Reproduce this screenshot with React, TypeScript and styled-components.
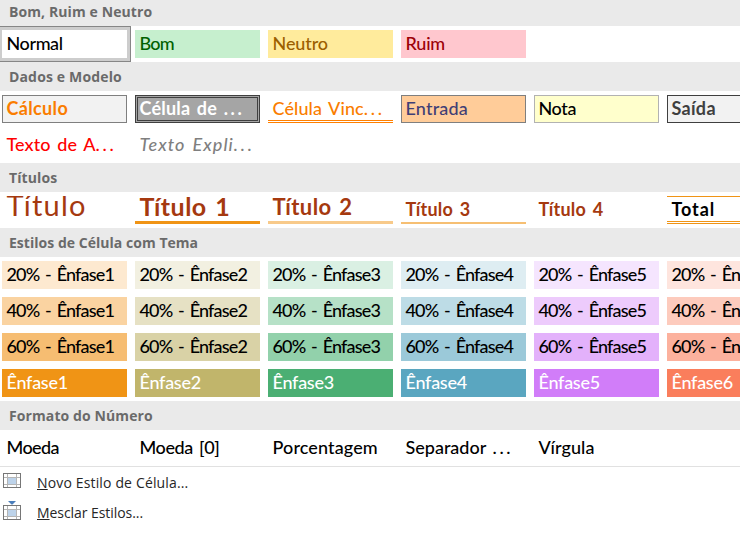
import React from 'react';
import styled, { createGlobalStyle, css } from 'styled-components';

const GlobalStyle = createGlobalStyle`
  body { margin: 0; background: #fff; overflow: hidden; }
`;

const Gallery = styled.main`
  height: 535px;
  overflow: hidden;
  background: #fff;
  font-family: 'Open Sans', 'Noto Sans', sans-serif;
`;

const Viewport = styled.div`
  display: flex;
  flex-direction: column;
  justify-content: flex-end;
  height: 466px;
  overflow: hidden;
`;

const SectionTitle = styled.h2<{ $track?: number }>`
  flex: none;
  margin: 0;
  padding-left: 9px;
  height: 29px;
  line-height: 29px;
  background: #eaeaea;
  color: #6a6a6a;
  font-size: 14px;
  font-weight: 700;
  letter-spacing: ${(p) => p.$track ?? 0.1}px;
`;

const Row = styled.div`
  display: flex;
  flex: none;
  height: 36px;
  margin-left: -2px;
`;

const Slot = styled.div<{ $selected?: boolean }>`
  box-sizing: border-box;
  flex: none;
  width: 133px;
  height: 36px;
  padding: 4px;
  ${(p) =>
    p.$selected &&
    css`
      background: #cdcdcd;
      box-shadow: inset 0 0 0 1px #868686;
    `}
`;

type Edge = 'none' | 'box' | 'double' | 'linked' | 'total' | 'thick' | 'medium';

const edges: Record<Edge, (c: string) => ReturnType<typeof css> | string> = {
  none: () => '',
  box: (c) => css`box-shadow: inset 0 0 0 1px ${c};`,
  double: (c) => css`box-shadow: inset 0 0 0 1px ${c}, inset 0 0 0 2px #a5a5a5, inset 0 0 0 3px ${c};`,
  linked: (c) => css`box-shadow: inset 0 -1px ${c}, inset 0 -2px #fff, inset 0 -3px ${c};`,
  total: (c) => css`box-shadow: inset 0 1px ${c}, inset 0 -1px ${c}, inset 0 -2px #fff, inset 0 -3px ${c};`,
  thick: (c) => css`box-shadow: inset 0 -3px ${c};`,
  medium: (c) => css`box-shadow: inset 0 -2px ${c};`,
};

interface Look {
  $bg?: string;
  $fg?: string;
  $edge?: Edge;
  $line?: string;
  $size?: number;
  $weight?: number;
  $italic?: boolean;
  $track?: number;
}

/* The line height keeps every label on a baseline 20px below the cell top. */
const Swatch = styled.div<Look>`
  height: 28px;
  box-sizing: border-box;
  padding-left: 4.5px;
  overflow: hidden;
  white-space: nowrap;
  font-family: Lato, 'Open Sans', sans-serif;
  background: ${(p) => p.$bg ?? '#fff'};
  color: ${(p) => p.$fg ?? '#000'};
  font-size: ${(p) => p.$size ?? 18}px;
  font-weight: ${(p) => p.$weight ?? 500};
  font-style: ${(p) => (p.$italic ? 'italic' : 'normal')};
  letter-spacing: ${(p) => p.$track ?? 0}px;
  word-spacing: 2px;
  line-height: ${(p) => 2 * (20 - 0.387 * (p.$size ?? 18))}px;
  ${(p) => edges[p.$edge ?? 'none'](p.$line ?? '#000')}
`;

const Dots = styled.span`
  letter-spacing: 2.7px;
`;

interface Style {
  label: string;
  cut?: boolean;
  selected?: boolean;
  look?: Look;
}

const quality: Style[] = [
  { label: 'Normal', selected: true, look: { $track: -0.4 } },
  { label: 'Bom', look: { $bg: '#c6efce', $fg: '#006100', $track: -0.8 } },
  { label: 'Neutro', look: { $bg: '#ffeb9c', $fg: '#9c5f00', $track: -0.1 } },
  { label: 'Ruim', look: { $bg: '#ffc7ce', $fg: '#9c0006', $track: -0.2 } },
];

const data: Style[][] = [
  [
    { label: 'Cálculo', look: { $bg: '#f2f2f2', $fg: '#fa7d00', $weight: 700, $edge: 'box', $line: '#7f7f7f', $track: 0.35 } },
    { label: 'Célula de ', cut: true, look: { $bg: '#a5a5a5', $fg: '#fff', $weight: 700, $edge: 'double', $line: '#3f3f3f', $track: 0.2 } },
    { label: 'Célula Vinc', cut: true, look: { $fg: '#fa7d00', $edge: 'linked', $line: '#ff8001', $track: 0.1 } },
    { label: 'Entrada', look: { $bg: '#ffcc99', $fg: '#3f3f76', $edge: 'box', $line: '#7f7f7f', $track: 0.2 } },
    { label: 'Nota', look: { $bg: '#ffffcc', $edge: 'box', $line: '#b2b2b2', $track: -0.4 } },
    { label: 'Saída', look: { $bg: '#f2f2f2', $fg: '#3f3f3f', $weight: 700, $edge: 'box', $line: '#3f3f3f', $track: 0.3 } },
  ],
  [
    { label: 'Texto de A', cut: true, look: { $fg: '#ff0000', $track: 0.1 } },
    { label: 'Texto Expli', cut: true, look: { $fg: '#7f7f7f', $italic: true, $track: 1.05 } },
  ],
];

const titles: Style[] = [
  { label: 'Título', look: { $fg: '#a5390f', $size: 29, $weight: 400, $track: 1.2 } },
  { label: 'Título 1', look: { $fg: '#a5390f', $size: 25, $weight: 700, $edge: 'thick', $line: '#f09415', $track: 0.45 } },
  { label: 'Título 2', look: { $fg: '#a5390f', $size: 22, $weight: 700, $edge: 'thick', $line: '#f8ca8a', $track: 0.4 } },
  { label: 'Título 3', look: { $fg: '#a5390f', $weight: 700, $edge: 'medium', $line: '#f6bf73', $track: 0.2 } },
  { label: 'Título 4', look: { $fg: '#a5390f', $weight: 700, $track: 0.2 } },
  { label: 'Total', look: { $weight: 700, $edge: 'total', $line: '#f09415', $track: 0.9 } },
];

const accents = [
  ['#fde9d0', '#fad3a1', '#f6bd72', '#f09415'],
  ['#f2f0e1', '#e6e1c4', '#d9d2a6', '#c1b56b'],
  ['#daf0e3', '#b6e1c7', '#92d1ab', '#4baf73'],
  ['#deedf2', '#bddce6', '#9bc9d9', '#5aa6c0'],
  ['#f5e5fe', '#edcbfc', '#e3b1fb', '#d17df9'],
  ['#fee5de', '#fdcbbd', '#fcb19d', '#fa7e5c'],
];

const themed: Style[][] = ['20% - ', '40% - ', '60% - ', ''].map((prefix, level) =>
  accents.map((tints, i) => ({
    label: `${prefix}Ênfase${i + 1}`,
    look: { $bg: tints[level], $fg: prefix ? '#000' : '#fff', $track: prefix ? -0.83 : -0.25 },
  })),
);

const numbers: Style[] = [
  { label: 'Moeda', look: { $track: -0.6 } },
  { label: 'Moeda [0]', look: { $track: -0.4 } },
  { label: 'Porcentagem', look: { $track: 0.12 } },
  { label: 'Separador ', cut: true, look: { $track: 0 } },
  { label: 'Vírgula', look: { $track: 0.1 } },
];

function StyleRow({ items }: { items: Style[] }) {
  return (
    <Row>
      {items.map((s) => (
        <Slot key={s.label} $selected={s.selected}>
          <Swatch {...s.look}>
            {s.label}
            {s.cut && <Dots>...</Dots>}
          </Swatch>
        </Slot>
      ))}
    </Row>
  );
}

const Menu = styled.nav`
  border-top: 1px solid #e1e1e1;
`;

const MenuItem = styled.div<{ $track: number }>`
  display: flex;
  align-items: flex-start;
  height: 30px;
  padding-left: 3px;
  gap: 16px;
  color: #262626;
  font-size: 14px;
  line-height: 32px;
  letter-spacing: ${(p) => p.$track}px;
`;

const AccessKey = styled.span`
  text-decoration: underline;
  text-decoration-thickness: 1px;
  text-underline-offset: 1px;
`;

const Icon = styled.svg<{ $top: number }>`
  display: block;
  flex: none;
  margin-top: ${(p) => p.$top}px;
`;

function TableGlyph() {
  return (
    <>
      <path d="M4.5 1v13M13.5 1v13M1 4.5h16M1 11.5h16" stroke="#b5b5b5" fill="none" />
      <rect x="5" y="5" width="8" height="6" fill="#bdd3ea" />
      <rect x="0.5" y="0.5" width="17" height="14" stroke="#767676" fill="none" />
    </>
  );
}

export default function App() {
  return (
    <Gallery>
      <GlobalStyle />
      <Viewport>
        <SectionTitle>Bom, Ruim e Neutro</SectionTitle>
        <StyleRow items={quality} />
        <SectionTitle $track={0.15}>Dados e Modelo</SectionTitle>
        {data.map((items, i) => <StyleRow key={i} items={items} />)}
        <SectionTitle>Títulos</SectionTitle>
        <StyleRow items={titles} />
        <SectionTitle $track={0.03}>Estilos de Célula com Tema</SectionTitle>
        {themed.map((items, i) => <StyleRow key={i} items={items} />)}
        <SectionTitle>Formato do Número</SectionTitle>
        <StyleRow items={numbers} />
      </Viewport>
      <Menu>
        <MenuItem $track={0.15}>
          <Icon $top={6} width="18" height="15" viewBox="0 0 18 15">
            <TableGlyph />
          </Icon>
          <span><AccessKey>N</AccessKey>ovo Estilo de Célula...</span>
        </MenuItem>
        <MenuItem $track={-0.06}>
          <Icon $top={4} width="18" height="19" viewBox="0 -4 18 19">
            <TableGlyph />
            <path d="M5 -4h8L9.5 -0.5h-1z" fill="#4a7ebb" />
          </Icon>
          <span><AccessKey>M</AccessKey>esclar Estilos...</span>
        </MenuItem>
      </Menu>
    </Gallery>
  );
}
